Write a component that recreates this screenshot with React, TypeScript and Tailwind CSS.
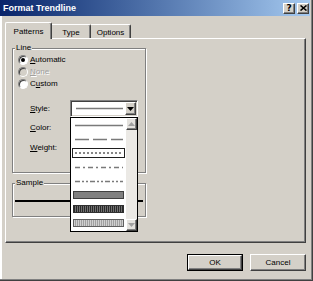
import React from "react";

const bevel =
  "border border-t-white border-l-white border-r-[#404040] border-b-[#404040] shadow-[inset_-1px_-1px_0_#808080]";

function Radio({ checked, disabled }: { checked?: boolean; disabled?: boolean }) {
  return (
    <span
      className={`relative inline-block w-[10px] h-[10px] rounded-full border border-t-[#808080] border-l-[#808080] border-b-white border-r-white shadow-[inset_1px_1px_0_#404040] ${
        disabled ? "bg-[#d4d0c8]" : "bg-white"
      }`}
    >
      {checked && (
        <span className="absolute left-[2px] top-[2px] w-[4px] h-[4px] rounded-full bg-black" />
      )}
    </span>
  );
}

function Arrow({ up, color }: { up?: boolean; color: string }) {
  return (
    <svg width="7" height="4" viewBox="0 0 7 4">
      {up ? (
        <path d="M0 4 L3.5 0 L7 4 Z" fill={color} />
      ) : (
        <path d="M0 0 L7 0 L3.5 4 Z" fill={color} />
      )}
    </svg>
  );
}

function LineItem({ dash }: { dash?: string }) {
  return (
    <div className="h-[14px] w-[55px] flex items-center justify-center">
      <svg width="48" height="3" viewBox="0 0 48 3">
        <line x1="0" x2="48" y1="1.5" y2="1.5" stroke="#7a7a7a" strokeWidth="1.6" strokeDasharray={dash} />
      </svg>
    </div>
  );
}

function BarItem({ fill, stripe, border }: { fill: string; stripe?: string; border: string }) {
  const id = "p" + fill.replace("#", "") + (stripe ? stripe.replace("#", "") : "");
  return (
    <div className="h-[14px] w-[55px] flex items-center justify-center">
      <svg width="51" height="8" viewBox="0 0 51 8">
        {stripe && (
          <defs>
            <pattern id={id} width="2" height="2" patternUnits="userSpaceOnUse">
              <rect width="2" height="2" fill={fill} />
              <rect width="1" height="2" fill={stripe} />
            </pattern>
          </defs>
        )}
        <rect x="0.5" y="0.5" width="50" height="7" fill={stripe ? `url(#${id})` : fill} stroke={border} strokeWidth="1" />
      </svg>
    </div>
  );
}

function GroupBox({ label, className, children }: { label: string; className: string; children?: React.ReactNode }) {
  return (
    <div className={`relative border border-[#808080] shadow-[inset_1px_1px_0_#ffffff,1px_1px_0_#ffffff] ${className}`}>
      <span className="absolute left-[2px] top-[-6px] px-[1px] bg-[#d4d0c8] leading-[10px]">{label}</span>
      {children}
    </div>
  );
}

export default function App() {
  return (
    <div className="relative w-[313px] h-[281px] bg-[#d4d0c8] overflow-hidden font-['Liberation_Sans',Arial,sans-serif] text-[8px] leading-[10px] text-black shadow-[inset_-1px_-1px_0_#404040,inset_-2px_-2px_0_#808080,inset_2px_0_0_#ffffff]">
      {/* Title bar */}
      <div className="flex items-center justify-between w-[310px] h-[16px] pl-[3px] pr-[1px] bg-gradient-to-r from-[#0a246a] to-[#a6caf0]">
        <span className="text-white font-bold text-[9px] leading-[11px]">Format Trendline</span>
        <div className="flex gap-[2px]">
          <div className={`w-[12px] h-[11px] bg-[#d4d0c8] flex items-center justify-center ${bevel}`}>
            <span className="font-bold text-[9px] leading-[9px] font-['DejaVu_Sans',sans-serif]">?</span>
          </div>
          <div className={`w-[12px] h-[11px] bg-[#d4d0c8] flex items-center justify-center ${bevel}`}>
            <svg width="7" height="6" viewBox="0 0 7 6">
              <path d="M0.5 0.5 L6.5 5.5 M6.5 0.5 L0.5 5.5" stroke="#000" strokeWidth="1.6" />
            </svg>
          </div>
        </div>
      </div>

      <div className="pl-[5px] pt-[6px]">
        {/* Tabs */}
        <div className="flex items-end h-[16px]">
          <div className="relative z-10 w-[47px] h-[17px] mb-[-1px] bg-[#d4d0c8] border-t border-l border-t-white border-l-white border-r border-r-[#404040] shadow-[inset_-1px_0_0_#808080] rounded-t-[2px] flex justify-center pt-[4px]">
            Patterns
          </div>
          <div className="w-[39px] h-[14px] bg-[#d4d0c8] border-t border-t-white border-r border-r-[#404040] shadow-[inset_-1px_0_0_#808080] rounded-tr-[2px] flex justify-center pt-[3px]">
            Type
          </div>
          <div className="w-[40px] h-[14px] bg-[#d4d0c8] border-t border-t-white border-r border-r-[#404040] shadow-[inset_-1px_0_0_#808080] rounded-tr-[2px] flex justify-center pt-[3px]">
            Options
          </div>
        </div>

        {/* Panel */}
        <div className={`w-[301px] h-[205px] pl-[6px] pt-[9px] ${bevel}`}>
          <GroupBox label="Line" className="w-[134px] h-[125px] pt-[5px] pl-[5px]">
            <div className="flex items-center h-[12px] gap-[2px]">
              <Radio checked />
              <span>
                <span className="underline">A</span>utomatic
              </span>
            </div>
            <div className="flex items-center h-[12px] gap-[2px]">
              <Radio disabled />
              <span className="text-[#a0a0a0] [text-shadow:1px_1px_0_#ffffff]">
                <span className="underline">N</span>one
              </span>
            </div>
            <div className="flex items-center h-[12px] gap-[2px]">
              <Radio />
              <span>
                C<span className="underline">u</span>stom
              </span>
            </div>

            <div className="flex items-center h-[17px] mt-[10px] pl-[12px]">
              <span className="w-[40px]">
                <span className="underline">S</span>tyle:
              </span>
              <div className="relative w-[68px] h-[17px] bg-white border border-t-[#808080] border-l-[#808080] border-b-white border-r-white shadow-[inset_1px_1px_0_#404040,inset_-1px_-1px_0_#d4d0c8] flex items-center pl-[5px] pr-[1px]">
                <svg width="47" height="3" viewBox="0 0 47 3">
                  <line x1="0" x2="47" y1="1.5" y2="1.5" stroke="#7a7a7a" strokeWidth="1.6" />
                </svg>
                <div className={`ml-auto w-[11px] h-[13px] bg-[#d4d0c8] flex items-center justify-center ${bevel}`}>
                  <Arrow color="#000" />
                </div>
              </div>
            </div>
            <div className="flex items-center h-[16px] mt-[3px] pl-[12px]">
              <span>
                <span className="underline">C</span>olor:
              </span>
            </div>
            <div className="flex items-center h-[16px] mt-[4px] pl-[12px]">
              <span>
                <span className="underline">W</span>eight:
              </span>
            </div>
          </GroupBox>

          <GroupBox label="Sample" className="w-[134px] h-[34px] mt-[10px] pt-[2px] flex items-center">
            <div className="ml-[2px] w-[128px] h-[2px] bg-black" />
          </GroupBox>
        </div>

        {/* Buttons */}
        <div className="w-[301px] flex justify-end gap-[7px] mt-[11px]">
          <div className="w-[56px] h-[17px] border border-black">
            <div className={`w-full h-full flex items-center justify-center ${bevel}`}>OK</div>
          </div>
          <div className={`w-[56px] h-[17px] flex items-center justify-center ${bevel}`}>Cancel</div>
        </div>
      </div>

      {/* Dropdown list (overlay) */}
      <div className="absolute left-[70px] top-[117px] w-[68px] h-[115px] bg-white border border-black flex">
        <div className="w-[55px] flex flex-col">
          <LineItem />
          <LineItem dash="14 4" />
          <div className="h-[14px] w-[55px] flex items-center justify-center">
            <div className="w-[53px] h-[10px] border-[1.5px] border-[#202020] flex items-center justify-center">
              <svg width="47" height="2" viewBox="0 0 47 2">
                <line x1="0" x2="47" y1="1" y2="1" stroke="#606060" strokeWidth="1.3" strokeDasharray="2 2" />
              </svg>
            </div>
          </div>
          <LineItem dash="5 3 2 3" />
          <LineItem dash="5 2 2 2 2 2" />
          <BarItem fill="#808080" border="#404040" />
          <BarItem fill="#2a2a2a" stripe="#707070" border="#303030" />
          <BarItem fill="#d0d0d0" stripe="#a0a0a0" border="#606060" />
        </div>
        <div className="w-[11px] flex flex-col bg-[#ebe9e5]">
          <div className={`h-[12px] bg-[#e4e2de] flex items-center justify-center ${bevel}`}>
            <Arrow up color="#a0a0a0" />
          </div>
          <div className="flex-1" />
          <div className={`h-[12px] bg-[#e4e2de] flex items-center justify-center ${bevel}`}>
            <Arrow color="#a0a0a0" />
          </div>
        </div>
      </div>
    </div>
  );
}
